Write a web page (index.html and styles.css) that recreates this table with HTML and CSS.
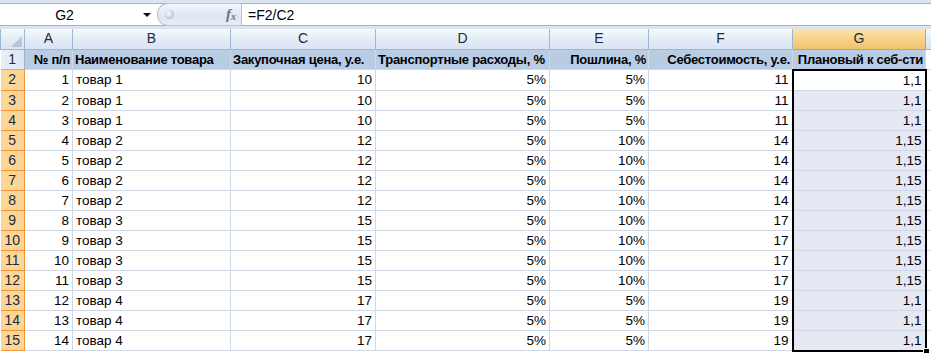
FILE: index.html
```html
<!DOCTYPE html>
<html>
<head>
<meta charset="utf-8">
<link rel="stylesheet" href="styles.css">
</head>
<body>
<div class="app">
  <div class="fbar">
    <div class="namebox"><span class="nb-text">G2</span><span class="nb-arrow"></span></div>
    <div class="pill"><span class="knob"></span><span class="fx">f<sub>x</sub></span></div>
    <div class="formula">=F2/C2</div>
  </div>
  <div class="band"></div>
  <table class="sheet">
    <colgroup>
      <col class="c-rh"><col class="c-a"><col class="c-b"><col class="c-c"><col class="c-d"><col class="c-e"><col class="c-f"><col class="c-g"><col class="c-h">
    </colgroup>
    <thead>
      <tr>
        <th class="corner"><span class="tri"></span></th>
        <th>A</th><th>B</th><th>C</th><th>D</th><th>E</th><th>F</th><th class="sel">G</th><th></th>
      </tr>
    </thead>
    <tbody id="body">
      <tr class="hdr">
        <th class="rn">1</th>
        <td class="r">№ п/п</td><td>Наименование товара</td><td>Закупочная цена, у.е.</td><td>Транспортные расходы, %</td><td class="r">Пошлина, %</td><td class="r">Себестоимость, у.е.</td><td class="r">Плановый к себ-сти</td><td class="empty"></td>
      </tr>
    </tbody>
  </table>
</div>
<script src="app.js"></script>
</body>
</html>
```
FILE: app.js
```js
const rows = [
  [1,'товар 1',10,'5%','5%',11,'1,1'],
  [2,'товар 1',10,'5%','5%',11,'1,1'],
  [3,'товар 1',10,'5%','5%',11,'1,1'],
  [4,'товар 2',12,'5%','10%',14,'1,15'],
  [5,'товар 2',12,'5%','10%',14,'1,15'],
  [6,'товар 2',12,'5%','10%',14,'1,15'],
  [7,'товар 2',12,'5%','10%',14,'1,15'],
  [8,'товар 3',15,'5%','10%',17,'1,15'],
  [9,'товар 3',15,'5%','10%',17,'1,15'],
  [10,'товар 3',15,'5%','10%',17,'1,15'],
  [11,'товар 3',15,'5%','10%',17,'1,15'],
  [12,'товар 4',17,'5%','5%',19,'1,1'],
  [13,'товар 4',17,'5%','5%',19,'1,1'],
  [14,'товар 4',17,'5%','5%',19,'1,1']
];
const body = document.getElementById('body');
rows.forEach((r, i) => {
  const tr = document.createElement('tr');
  let cls = 'g';
  if (i === 0) cls += ' g-first';
  else cls += ' g-range';
  if (i === rows.length - 1) cls += ' g-last';
  tr.innerHTML =
    `<th class="rn rsel">${i + 2}</th>` +
    `<td class="r">${r[0]}</td>` +
    `<td>${r[1]}</td>` +
    `<td class="r">${r[2]}</td>` +
    `<td class="r">${r[3]}</td>` +
    `<td class="r">${r[4]}</td>` +
    `<td class="r">${r[5]}</td>` +
    `<td class="r ${cls}">${r[6]}${i === rows.length - 1 ? '<span class="handle"></span>' : ''}</td>` +
    `<td class="empty"></td>`;
  body.appendChild(tr);
});
```
FILE: styles.css
```css
html, body {
  margin: 0;
  padding: 0;
  background: #ffffff;
}
.app {
  width: 931px;
  height: 353px;
  overflow: hidden;
  font-family: "Liberation Sans", Arial, sans-serif;
  font-size: 13.5px;
  color: #000;
}
.fbar {
  display: flex;
  height: 21px;
  margin-top: 3px;
  border-top: 1px solid #9fb3cb;
  border-bottom: 1px solid #9fb3cb;
  background: #fff;
  box-shadow: 0 -3px 0 #dbe5f1;
}
.namebox {
  width: 155px;
  display: flex;
  align-items: center;
  font-size: 14px;
}
.nb-text {
  flex: 1;
  text-align: center;
  padding-right: 14px;
}
.nb-arrow {
  width: 0;
  height: 0;
  border-left: 4px solid transparent;
  border-right: 4px solid transparent;
  border-top: 4px solid #111;
  margin-right: 4px;
}
.pill {
  width: 84px;
  margin: 0 0 0 2px;
  border-radius: 11px 0 0 11px;
  background: linear-gradient(#f4f7fb, #dce6f3 60%, #e8eef7);
  border: 1px solid #b5c6db;
  border-right: none;
  box-sizing: border-box;
  display: flex;
  align-items: center;
  justify-content: space-between;
  position: relative;
  top: -1px;
  height: 23px;
}
.knob {
  width: 9px;
  height: 9px;
  border-radius: 50%;
  margin-left: 7px;
  background: radial-gradient(circle at 40% 40%, #ffffff, #b8c4d2 70%, #9aa8b8);
}
.fx {
  font-family: "Liberation Serif", serif;
  font-style: italic;
  font-weight: bold;
  color: #6b7480;
  font-size: 15px;
  margin-right: 5px;
  line-height: 1;
}
.fx sub {
  font-size: 10px;
  vertical-align: baseline;
  position: relative;
  top: 1px;
}
.formula {
  flex: 1;
  border-left: 1px solid #b5c6db;
  padding-left: 6px;
  display: flex;
  align-items: center;
  font-size: 14px;
}
.band {
  height: 3px;
  background: #dbe5f1;
}
.sheet {
  border-collapse: collapse;
  table-layout: fixed;
  width: 931px;
}
.c-rh { width: 24px; }
.c-a { width: 48px; }
.c-b { width: 158px; }
.c-c { width: 145px; }
.c-d { width: 174px; }
.c-e { width: 99px; }
.c-f { width: 144px; }
.c-g { width: 133px; }
.c-h { width: 6px; }
.sheet th, .sheet td {
  height: 20px;
  padding: 0 3px;
  white-space: nowrap;
  overflow: hidden;
  line-height: 19px;
  box-sizing: border-box;
}
.sheet td {
  border: 1px solid #d0d7e5;
}
.sheet thead th {
  font-weight: normal;
  font-size: 14px;
  color: #1e2a3a;
  background: linear-gradient(#f6f9fc, #e4ecf7 50%, #d9e4f1);
  border: 1px solid #9eb6ce;
  border-top: none;
  text-align: center;
}
.sheet thead th.sel {
  background: linear-gradient(#fbe2a8, #f8d38a 50%, #f2c06c);
  border-left: 1px solid #f29536;
  border-right: 1px solid #f29536;
  border-bottom: 1px solid #f29536;
}
.corner {
  position: relative;
}
.tri {
  position: absolute;
  right: 2px;
  bottom: 2px;
  width: 0;
  height: 0;
  border-left: 11px solid transparent;
  border-bottom: 11px solid #b7c5d7;
}
.rn {
  font-weight: normal;
  font-size: 14px;
  text-align: center;
  color: #1e2a3a;
  padding: 0 !important;
  background: linear-gradient(90deg, #e9eff7, #dce6f2);
  border: 1px solid #9eb6ce;
  border-left: none;
}
.rn.rsel {
  background: #fcd696;
  border-right: 1px solid #f29536;
  border-bottom: 1px solid #f29536;
}
.r { text-align: right; }
.hdr td {
  background: #b8cce4;
  font-weight: bold;
  font-size: 13px;
  letter-spacing: -0.25px;
  border-color: #d0d7e5;
  padding: 0 2px;
}
.hdr td.empty { background: #fff; }
.g {
  position: relative;
  border-left: 2px solid #000 !important;
  border-right: 2px solid #000 !important;
}
.g-range { background: #e6e8f4; }
.g-first { border-top: 2px solid #000 !important; background: #fff; }
.g-last { border-bottom: 2px solid #000 !important; overflow: visible !important; }
.handle {
  position: absolute;
  right: -5px;
  bottom: -5px;
  width: 5px;
  height: 5px;
  background: #000;
  border: 1px solid #fff;
}
```
